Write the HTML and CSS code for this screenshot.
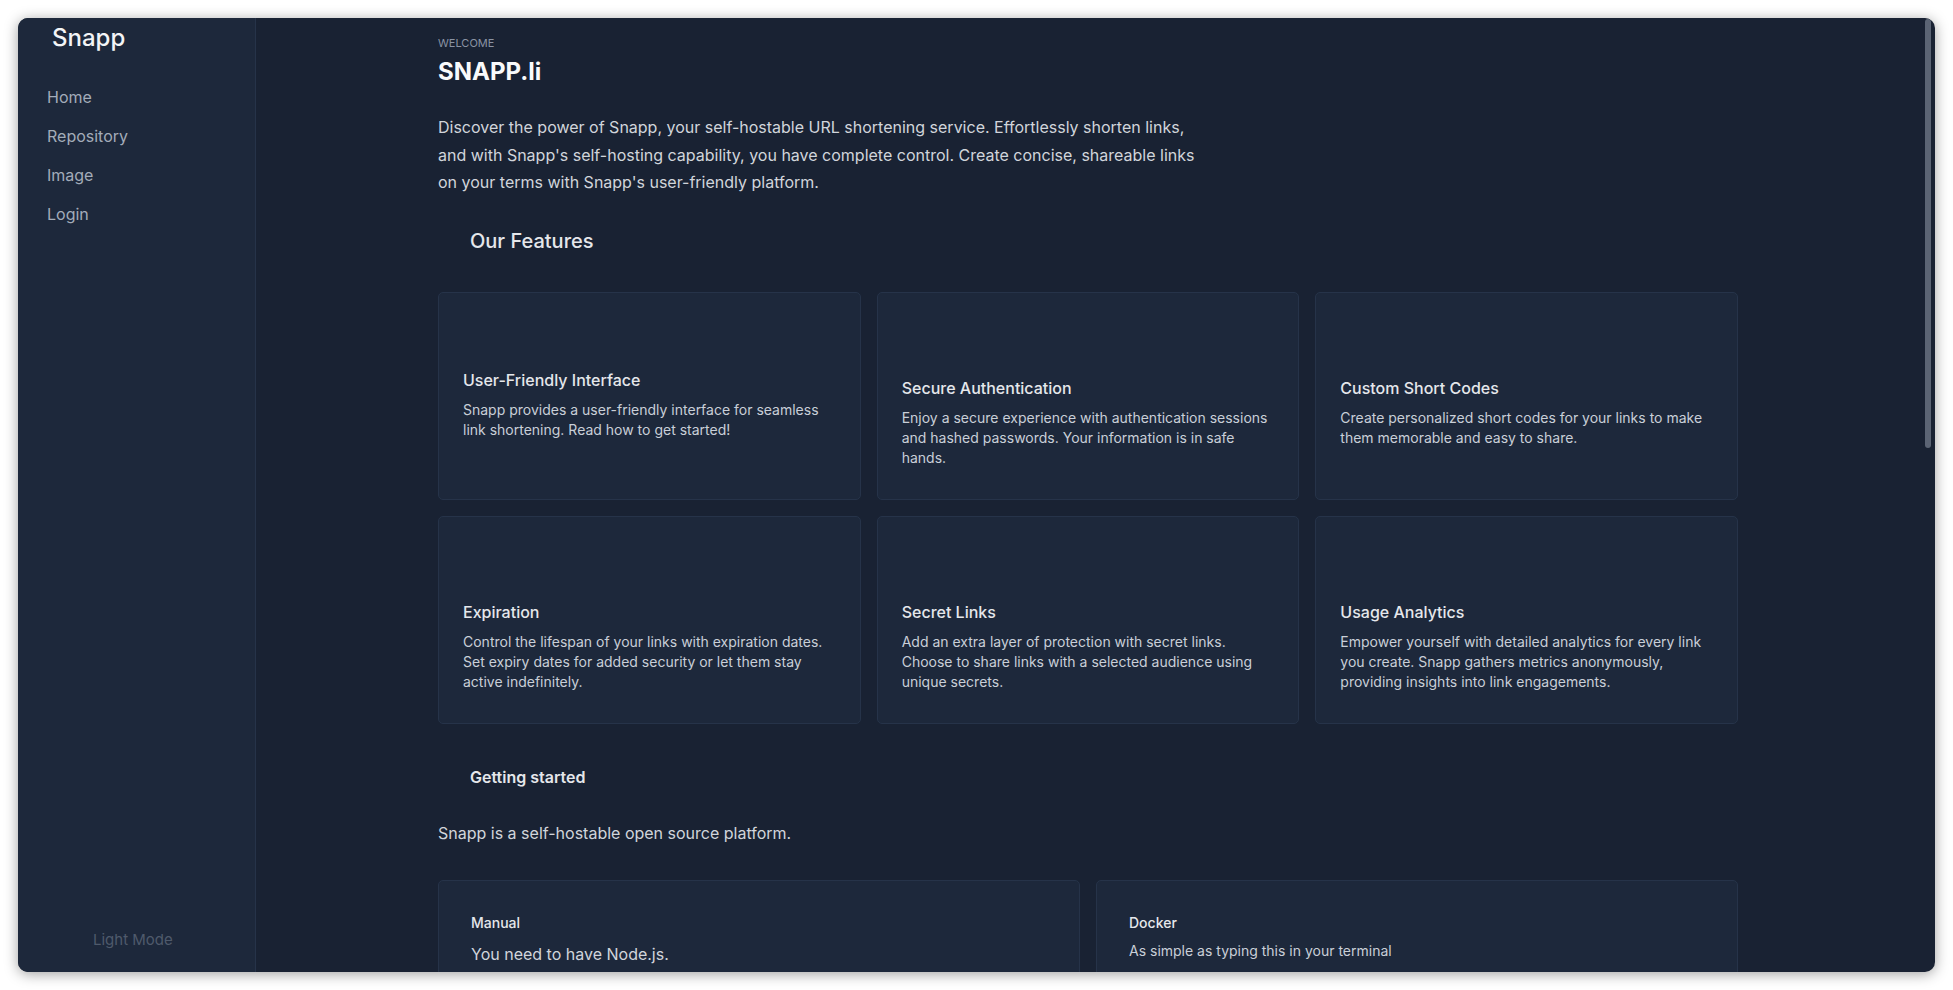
FILE: index.html
```html
<!DOCTYPE html>
<html lang="en">
<head>
<meta charset="utf-8">
<title>Snapp</title>
<link rel="stylesheet" href="styles.css">
</head>
<body>
<div class="window">
  <aside class="sidebar">
    <div class="logo">Snapp</div>
    <nav class="nav">
      <a href="#">Home</a>
      <a href="#">Repository</a>
      <a href="#">Image</a>
      <a href="#">Login</a>
    </nav>
    <button class="theme-toggle" type="button">Light Mode</button>
  </aside>
  <main class="main">
    <div class="content">
      <p class="eyebrow">WELCOME</p>
      <h1 class="title">SNAPP.li</h1>
      <p class="lead">Discover the power of Snapp, your self-hostable URL shortening service. Effortlessly shorten links, and with Snapp's self-hosting capability, you have complete control. Create concise, shareable links on your terms with Snapp's user-friendly platform.</p>

      <h2 class="section-title">Our Features</h2>
      <div class="features">
        <div class="feature feature--first">
          <h3 class="feature-title">User-Friendly Interface</h3>
          <p class="feature-text">Snapp provides a user-friendly interface for seamless link shortening. Read how to get started!</p>
        </div>
        <div class="feature">
          <h3 class="feature-title">Secure Authentication</h3>
          <p class="feature-text">Enjoy a secure experience with authentication sessions and hashed passwords. Your information is in safe hands.</p>
        </div>
        <div class="feature">
          <h3 class="feature-title">Custom Short Codes</h3>
          <p class="feature-text">Create personalized short codes for your links to make them memorable and easy to share.</p>
        </div>
        <div class="feature">
          <h3 class="feature-title">Expiration</h3>
          <p class="feature-text">Control the lifespan of your links with expiration dates. Set expiry dates for added security or let them stay active indefinitely.</p>
        </div>
        <div class="feature">
          <h3 class="feature-title">Secret Links</h3>
          <p class="feature-text">Add an extra layer of protection with secret links. Choose to share links with a selected audience using unique secrets.</p>
        </div>
        <div class="feature">
          <h3 class="feature-title">Usage Analytics</h3>
          <p class="feature-text">Empower yourself with detailed analytics for every link you create. Snapp gathers metrics anonymously, providing insights into link engagements.</p>
        </div>
      </div>

      <h3 class="section-subtitle">Getting started</h3>
      <p class="intro">Snapp is a self-hostable open source platform.</p>

      <div class="setup">
        <div class="setup-card">
          <h4 class="setup-title">Manual</h4>
          <p class="setup-text setup-text--lg">You need to have Node.js.</p>
        </div>
        <div class="setup-card">
          <h4 class="setup-title">Docker</h4>
          <p class="setup-text">As simple as typing this in your terminal</p>
        </div>
      </div>
    </div>
  </main>
  <div class="scroll-thumb"></div>
</div>
</body>
</html>
```
FILE: styles.css
```css
* { box-sizing: border-box; }

html, body {
  margin: 0;
  height: 100%;
}

body {
  background: #ffffff;
  padding: 18px;
  font-family: Inter, "Liberation Sans", "Noto Sans", sans-serif;
  color: #d1d5db;
}

.window {
  position: relative;
  display: flex;
  height: 954px;
  border-radius: 10px;
  overflow: hidden;
  background: #192233;
  box-shadow: 0 2px 14px rgba(0, 0, 0, 0.38);
}

/* Sidebar */
.sidebar {
  width: 238px;
  flex: none;
  display: flex;
  flex-direction: column;
  background: #1d283b;
  border-right: 1px solid #263349;
}

.logo {
  padding: 4px 0 0 34px;
  font-size: 24px;
  line-height: 32px;
  font-weight: 500;
  color: #f3f4f6;
}

.nav {
  display: flex;
  flex-direction: column;
  padding: 24px 0 0 29px;
}

.nav a {
  font-size: 16px;
  line-height: 23px;
  padding: 8px 0;
  color: #a3acb9;
  text-decoration: none;
}

.theme-toggle {
  margin-top: auto;
  margin-bottom: 22px;
  padding: 0 0 0 75px;
  border: 0;
  background: none;
  text-align: left;
  font-family: inherit;
  font-size: 15px;
  line-height: 20px;
  color: #4f5a6b;
}

/* Main */
.main {
  flex: 1;
  overflow: hidden;
  padding-right: 15px;
}

.scroll-thumb {
  position: absolute;
  top: 1px;
  right: 4px;
  width: 6px;
  height: 429px;
  border-radius: 3px;
  background: #5b6474;
}

.content {
  max-width: 1300px;
  margin: 0 auto;
  padding-top: 17px;
}

.eyebrow {
  margin: 0;
  font-size: 11px;
  line-height: 16px;
  color: #8a93a3;
}

.title {
  margin: 5px 0 0;
  font-size: 24px;
  line-height: 32px;
  font-weight: 700;
  color: #f9fafb;
}

.lead {
  margin: 26px 0 0;
  max-width: 768px;
  font-size: 16px;
  line-height: 27.5px;
  color: #d1d5db;
}

.section-title {
  margin: 30px 0 0;
  padding-left: 32px;
  font-size: 20px;
  line-height: 28px;
  font-weight: 500;
  color: #e5e7eb;
}

.features {
  margin-top: 37px;
  display: grid;
  grid-template-columns: repeat(3, 1fr);
  gap: 16px;
}

.feature {
  height: 208px;
  padding: 83px 24px 24px;
  background: #1d283b;
  border: 1px solid #263349;
  border-radius: 5px;
}

.feature--first {
  padding-top: 75px;
}

.feature-title {
  margin: 0;
  font-size: 16px;
  line-height: 24px;
  font-weight: 500;
  color: #e5e7eb;
}

.feature-text {
  margin: 8px 0 0;
  font-size: 14px;
  line-height: 20px;
  color: #c9cfd8;
}

.section-subtitle {
  margin: 41px 0 0;
  padding-left: 32px;
  font-size: 16px;
  line-height: 24px;
  font-weight: 600;
  color: #e5e7eb;
}

.intro {
  margin: 32px 0 0;
  font-size: 16px;
  line-height: 24px;
  color: #d1d5db;
}

.setup {
  margin-top: 35px;
  display: grid;
  grid-template-columns: repeat(2, 1fr);
  gap: 16px;
}

.setup-card {
  min-height: 160px;
  padding: 32px;
  background: #1d283b;
  border: 1px solid #263349;
  border-radius: 5px;
}

.setup-title {
  margin: 0;
  font-size: 14px;
  line-height: 20px;
  font-weight: 500;
  color: #e5e7eb;
}

.setup-text {
  margin: 8px 0 0;
  font-size: 14px;
  line-height: 20px;
  color: #c9cfd8;
}

.setup-text--lg {
  margin-top: 9px;
  font-size: 16px;
  line-height: 24px;
  color: #d1d5db;
}
```
